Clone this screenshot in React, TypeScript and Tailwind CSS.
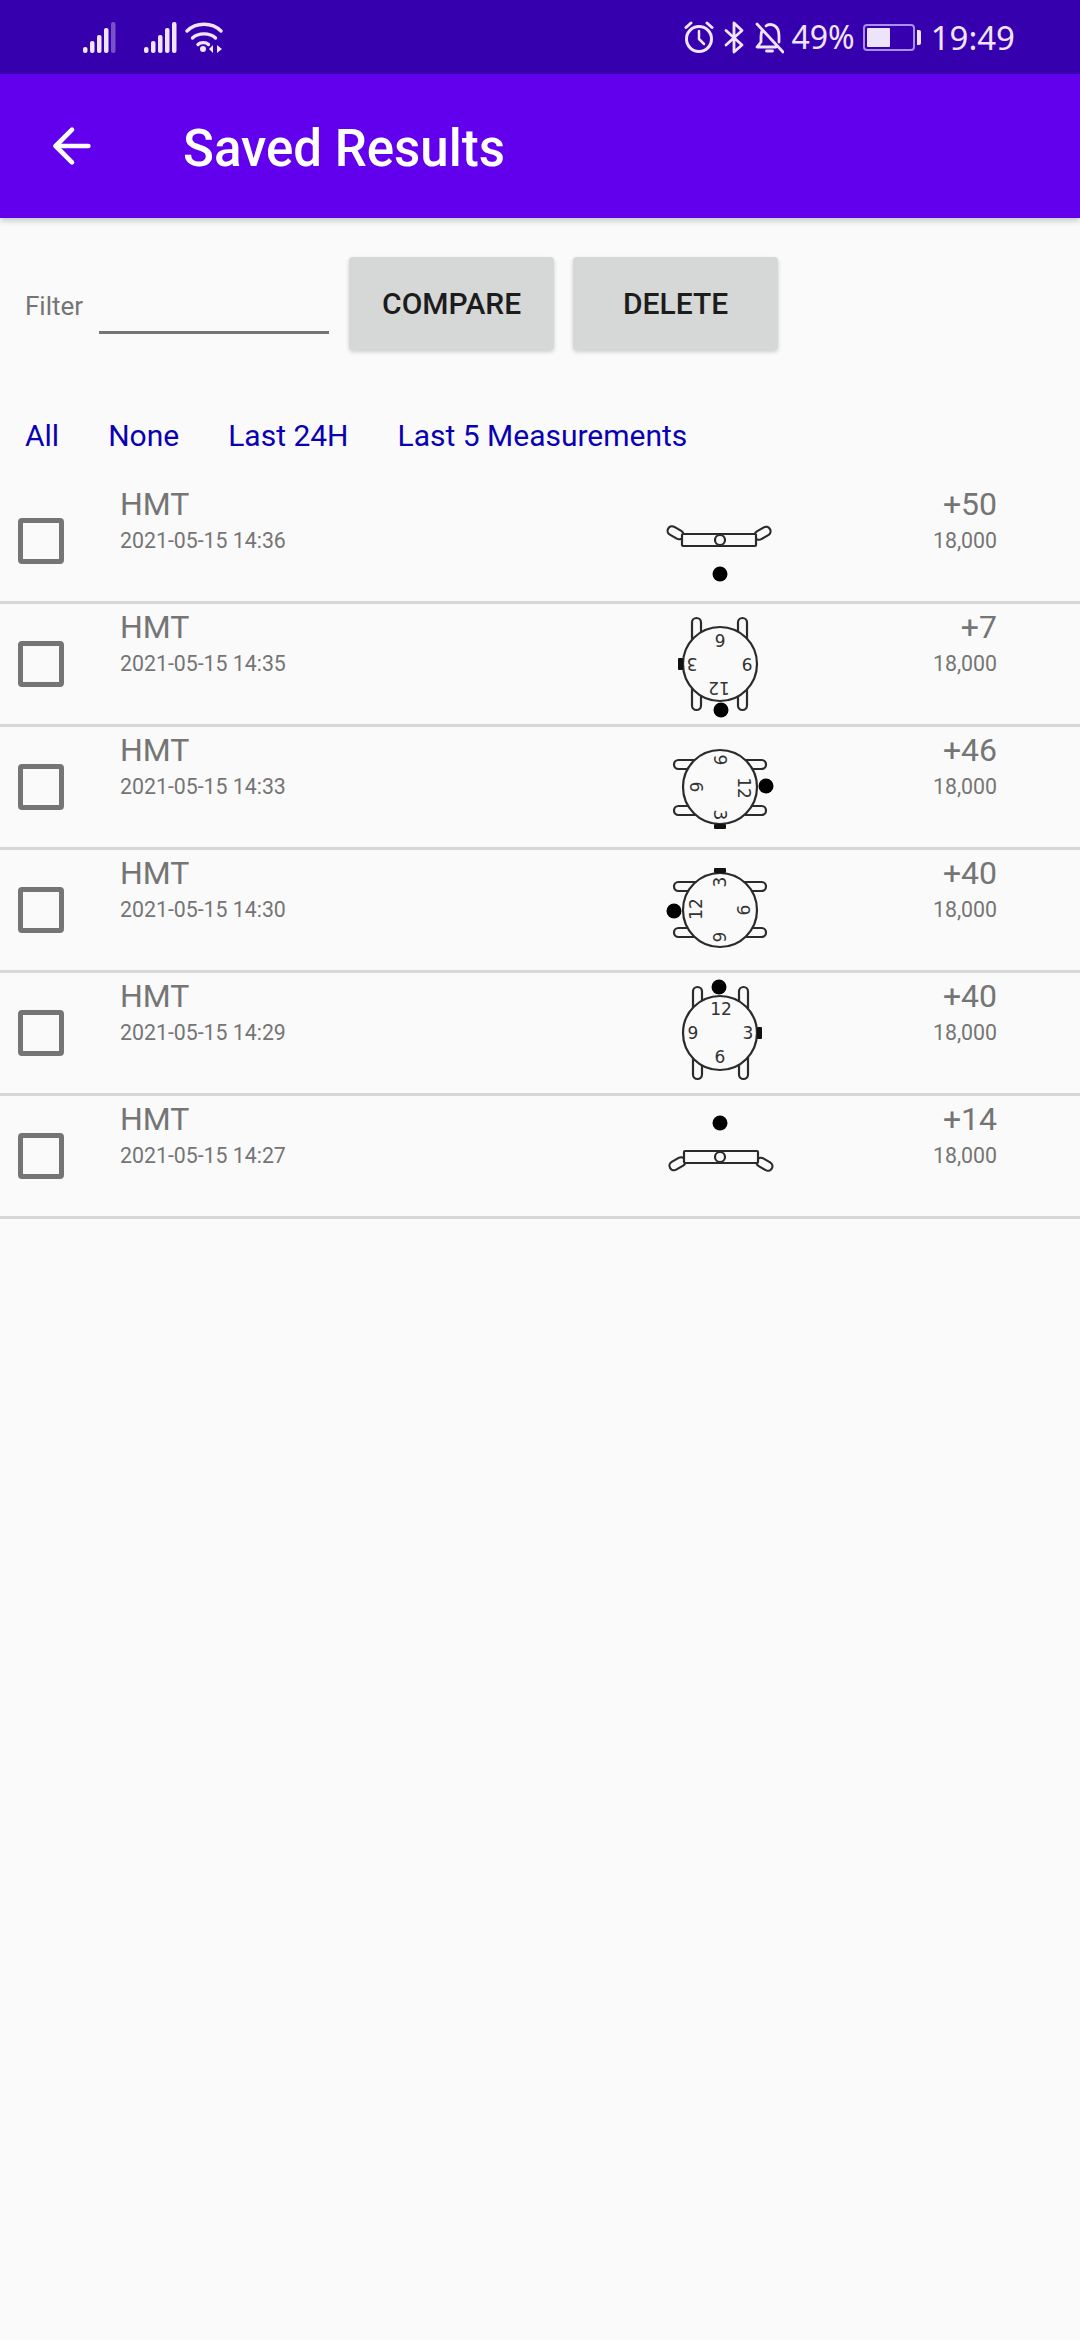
import { ArrowLeft } from "lucide-react";

type Pose = "flat" | "upright";

interface Measurement {
  time: string;
  rate: string;
  pose: Pose;
  rotate: number;
}

const MEASUREMENTS: Measurement[] = [
  { time: "2021-05-15 14:36", rate: "+50", pose: "flat", rotate: 180 },
  { time: "2021-05-15 14:35", rate: "+7", pose: "upright", rotate: 180 },
  { time: "2021-05-15 14:33", rate: "+46", pose: "upright", rotate: 90 },
  { time: "2021-05-15 14:30", rate: "+40", pose: "upright", rotate: 270 },
  { time: "2021-05-15 14:29", rate: "+40", pose: "upright", rotate: 0 },
  { time: "2021-05-15 14:27", rate: "+14", pose: "flat", rotate: 0 },
];

function SignalBars({ dimLast = false }: { dimLast?: boolean }) {
  const heights = [6, 12, 18, 25, 31];
  return (
    <svg width="33" height="32" viewBox="0 0 33 32" fill="#f0e4ff">
      {heights.map((h, i) => (
        <rect
          key={i}
          x={i * 7}
          y={32 - h}
          width="4.5"
          height={h}
          rx="2"
          opacity={dimLast && i === 4 ? 0.35 : 1}
        />
      ))}
    </svg>
  );
}

function WifiIcon() {
  return (
    <svg width="38" height="32" viewBox="0 0 38 32" fill="none" stroke="#f0e4ff" strokeWidth="3.4" strokeLinecap="round">
      <path d="M2 10C11 1 27 1 36 10" />
      <path d="M7.5 17C13 11.5 25 11.5 30.500 17" />
      <path d="M13 23.500C15.500 21 21 21 23.500 23.500" />
      <circle cx="18" cy="28" r="3" fill="#f0e4ff" stroke="none" />
      <path d="M28 24L24 28L28 32Z" fill="#f0e4ff" stroke="none" />
      <path d="M32 24L37 28L32 32Z" fill="#f0e4ff" stroke="none" />
    </svg>
  );
}

function AlarmIcon() {
  return (
    <svg width="30" height="32" viewBox="0 0 30 32" fill="none" stroke="#f0e4ff" strokeWidth="3" strokeLinecap="round" strokeLinejoin="round">
      <circle cx="15" cy="18" r="12.500" />
      <path d="M15 10V18L20 23" strokeWidth="2.500" />
      <path d="M2 6.500L7 2" />
      <path d="M28 6.500L23 2" />
    </svg>
  );
}

function BluetoothIcon() {
  return (
    <svg width="21" height="33" viewBox="0 0 21 33" fill="none" stroke="#f0e4ff" strokeWidth="2.800" strokeLinejoin="round" strokeLinecap="round">
      <path d="M2 9.500L18 24L10 31V2L18 9.500L2 24" />
    </svg>
  );
}

function BellOffIcon() {
  return (
    <svg width="29" height="33" viewBox="0 0 29 33" fill="none" stroke="#f0e4ff" strokeWidth="2.800" strokeLinejoin="round" strokeLinecap="round">
      <path d="M7 10C6 12 6 14 6 16V21L2 26H21" />
      <path d="M11 5C13 3 17 3 20 5C23 7 24 11 24 15V21" />
      <path d="M11.500 30H17.500" />
      <path d="M2 3L28 31" />
    </svg>
  );
}

function BatteryIcon() {
  return (
    <div className="flex items-center gap-[2px]">
      <div className="flex h-[27px] w-[52px] items-stretch rounded-[4px] border-2 border-[#a98fe8] p-[2px]">
        <div className="w-[23px] rounded-[1px] bg-[#ece4fb]" />
      </div>
      <div className="h-[15px] w-[4px] rounded-r-[2px] bg-[#ece4fb]" />
    </div>
  );
}

function WatchDrawing({ pose, rotate }: { pose: Pose; rotate: number }) {
  return (
    <svg width="108" height="108" viewBox="-54 -54 108 108" fill="none" stroke="#2b2b2b" strokeWidth="2.2">
      {/* the rotation is the position the watch was measured in */}
      <g transform={`rotate(${rotate})`}>
        {pose === "upright" ? (
          <>
            <rect x="-27" y="-46" width="9" height="92" rx="4.500" fill="#fafafa" />
            <rect x="19" y="-46" width="9" height="92" rx="4.500" fill="#fafafa" />
            <circle cx="0" cy="0" r="37" fill="#fafafa" />
            <rect x="37" y="-6" width="5" height="12" rx="1" fill="#111" stroke="none" />
            <circle cx="-1" cy="-46" r="7.500" fill="#000" stroke="none" />
            <g fill="#333" stroke="none" fontSize="17" fontFamily="'DejaVu Sans', sans-serif" textAnchor="middle">
              <text x="1" y="-18">12</text>
              <text x="28" y="6">3</text>
              <text x="0" y="30">6</text>
              <text x="-27" y="6">9</text>
            </g>
          </>
        ) : (
          <>
            <rect x="-51" y="3.500" width="17" height="9" rx="4.500" transform="rotate(-30 -43 8)" />
            <rect x="36" y="3.500" width="17" height="9" rx="4.500" transform="rotate(30 44 8)" />
            <rect x="-36" y="-5" width="74" height="12" rx="1" fill="#fafafa" />
            <circle cx="0" cy="1" r="5" fill="#fafafa" />
            <circle cx="0" cy="-33" r="7.500" fill="#000" stroke="none" />
          </>
        )}
      </g>
    </svg>
  );
}

function MeasurementRow({ item }: { item: Measurement }) {
  return (
    <li className="flex h-[123px] items-center border-b-[3px] border-[#d6d7d7] text-[#757575]">
      <div className="ml-[18px] h-[46px] w-[46px] shrink-0 rounded-[4px] border-[5px] border-[#757575]" />
      <div className="ml-[56px] flex w-[546px] flex-col self-start pt-[4px]">
        <span className="text-[32px] leading-[38px]">HMT</span>
        <span className="mt-[5px] text-[21.300px] leading-[26px]">{item.time}</span>
      </div>
      <div className="flex w-[108px] shrink-0 justify-center">
        <WatchDrawing pose={item.pose} rotate={item.rotate} />
      </div>
      <div className="flex w-[223px] flex-col items-end self-start pt-[4px]">
        <span className="text-[32px] leading-[38px]">{item.rate}</span>
        <span className="mt-[5px] text-[21.300px] leading-[26px]">18,000</span>
      </div>
    </li>
  );
}

export default function App() {
  return (
    <div className="flex min-h-[2340px] w-[1080px] flex-col bg-[#fafafa] font-['Roboto',sans-serif]">
      <div className="flex h-[74px] items-center justify-between bg-[#3700ae] pl-[83px] pr-[65px] text-[#f0e4ff]">
        <div className="flex items-center gap-[28px]">
          <SignalBars dimLast />
          <div className="flex items-center gap-[8px]">
            <SignalBars />
            <WifiIcon />
          </div>
        </div>
        <div className="flex items-center">
          <AlarmIcon />
          <div className="ml-[10px]">
            <BluetoothIcon />
          </div>
          <div className="ml-[10px]">
            <BellOffIcon />
          </div>
          <span className="ml-[7px] font-['Noto_Sans',sans-serif] text-[32px] leading-none">49%</span>
          <div className="ml-[8px]">
            <BatteryIcon />
          </div>
          <span className="ml-[10px] font-['Noto_Sans',sans-serif] text-[33px] leading-none">19:49</span>
        </div>
      </div>

      <header className="flex h-[144px] items-center bg-[#6200ee] shadow-[0_3px_6px_rgba(0,0,0,0.2)]">
        <ArrowLeft className="ml-[44px] h-[56px] w-[56px] text-white" strokeWidth={2} />
        <h1 className="ml-[83px] mt-[6px] text-[51px] font-medium text-white">Saved Results</h1>
      </header>

      <div className="flex pt-[39px]">
        <div className="flex h-[93px] items-center">
          <label className="ml-[25px] mt-[5px] text-[26px] text-[#757575]">Filter</label>
          <input className="ml-[16px] mt-[20px] h-[40px] w-[230px] border-b-[3px] border-[#757575] bg-transparent outline-none" />
        </div>
        <button className="ml-[20px] h-[93px] w-[205px] rounded-[4px] bg-[#d6d7d7] text-[30px] font-medium text-[#1c1c1c] shadow-[0_2px_4px_rgba(0,0,0,0.18)]">
          COMPARE
        </button>
        <button className="ml-[19px] h-[93px] w-[205px] rounded-[4px] bg-[#d6d7d7] text-[30px] font-medium text-[#1c1c1c] shadow-[0_2px_4px_rgba(0,0,0,0.18)]">
          DELETE
        </button>
      </div>

      <nav className="ml-[25px] mt-[63px] flex h-[44px] items-center gap-[49px] text-[30px] text-[#0a00b4]">
        <span>All</span>
        <span>None</span>
        <span>Last 24H</span>
        <span>Last 5 Measurements</span>
      </nav>

      <ul className="mt-[24px]">
        {MEASUREMENTS.map((item) => (
          <MeasurementRow key={item.time} item={item} />
        ))}
      </ul>
    </div>
  );
}
